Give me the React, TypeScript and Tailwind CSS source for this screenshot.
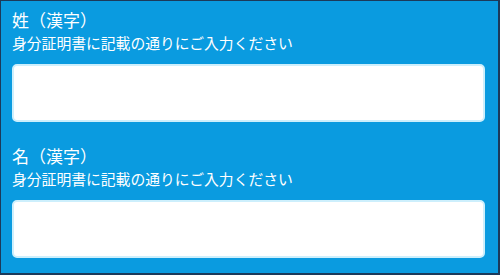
export default function App() {
  const fields = [
    { id: "last", label: "姓（漢字）" },
    { id: "first", label: "名（漢字）" },
  ];

  return (
    <div
      className="w-[500px] h-[275px] overflow-hidden bg-[#0a9be0] border-t border-l border-r-2 border-b-2 border-[#1c3a5a] text-white"
      style={{ fontFamily: '"Noto Sans CJK JP", "Noto Sans", sans-serif' }}
    >
      <div className="flex flex-col pl-[11px] pr-[13px] pt-[6px]">
        {fields.map((f) => (
          <div key={f.id} className="flex flex-col pb-[21px]">
            <label htmlFor={f.id} className="text-[17px] leading-[26px]">{f.label}</label>
            <p className="text-[14.8px] leading-[20px]">身分証明書に記載の通りにご入力ください</p>
            <input
              id={f.id}
              type="text"
              className="mt-[11px] h-[58px] w-full min-w-0 rounded-[5px] bg-white border-2 border-[#cdeffc] outline-none px-3 text-black"
            />
          </div>
        ))}
      </div>
    </div>
  );
}
